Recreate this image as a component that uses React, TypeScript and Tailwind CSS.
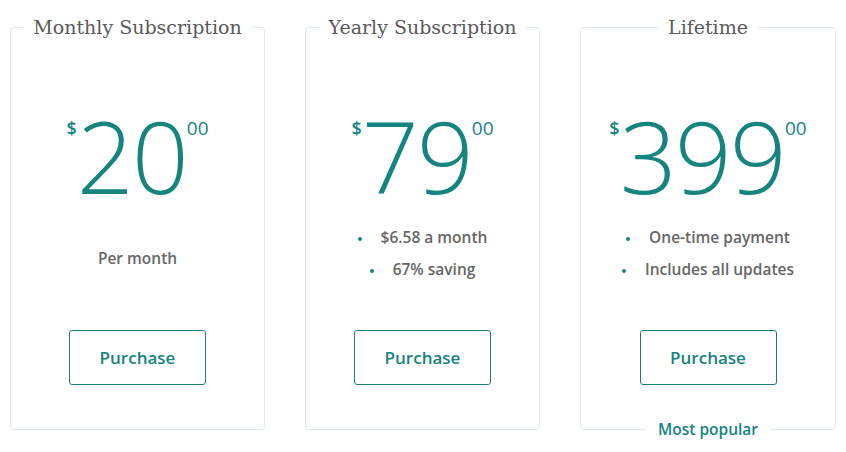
import React from 'react';

interface Plan {
  title: string;
  price: string;
  width: string;
  detailsPad: string;
  details: string[];
  bullets: boolean;
  badge?: string;
}

const PLANS: Plan[] = [
  { title: 'Monthly Subscription', price: '20', width: 'w-[255px]', detailsPad: 'pt-[37px]', details: ['Per month'], bullets: false },
  { title: 'Yearly Subscription', price: '79', width: 'w-[235px]', detailsPad: 'pt-[16px]', details: ['$6.58 a month', '67% saving'], bullets: true },
  { title: 'Lifetime', price: '399', width: 'w-[256px]', detailsPad: 'pt-[16px]', details: ['One-time payment', 'Includes all updates'], bullets: true, badge: 'Most popular' },
];

function PlanCard({ plan }: { plan: Plan }) {
  return (
    <fieldset className={`relative ${plan.width} shrink-0 rounded-[4px] border border-[#dce9ea]`}>
      <legend
        className="mx-auto px-[10px] text-[19px] leading-[28px] text-[#595959]"
        style={{ fontFamily: '"DejaVu Serif", "Liberation Serif", serif' }}
      >
        {plan.title}
      </legend>

      <div className="flex flex-col items-center pb-[44px]">
        {/* price */}
        <div className="mt-[64px] flex items-start text-[#15847f]">
          <span className="mt-[14px] text-[18px] leading-none font-semibold">$</span>
          <span className="text-[100px] leading-none font-light tracking-[-2px]">{plan.price}</span>
          <span className="mt-[14px] text-[19px] leading-none font-medium">00</span>
        </div>

        <div className={`h-[125px] ${plan.detailsPad}`}>
          <ul className={`text-[15.5px] leading-[32px] font-semibold text-[#666] text-center ${plan.bullets ? 'list-disc list-inside marker:text-[#15847f] marker:text-[12px]' : ''}`}>
            {plan.details.map((d) => (
              <li key={d} className="h-[32px]">
                {plan.bullets ? <span className="pl-[6px]">{d}</span> : d}
              </li>
            ))}
          </ul>
        </div>

        <button className="h-[55px] w-[137px] rounded-[3px] border border-[#1a7f7b] text-[17px] font-semibold text-[#15847f]">
          Purchase
        </button>
      </div>

      {plan.badge && (
        <span className="absolute bottom-0 left-1/2 -translate-x-1/2 translate-y-1/2 bg-white px-[12px] text-[15.5px] leading-[20px] font-semibold text-[#15847f] whitespace-nowrap">
          {plan.badge}
        </span>
      )}
    </fieldset>
  );
}

export default function App(): JSX.Element {
  return (
    <div
      className="w-[846px] h-[452px] bg-white pt-[13px] pl-[10px] flex items-start gap-[40px]"
      style={{ fontFamily: '"Open Sans", "Liberation Sans", sans-serif' }}
    >
      {PLANS.map((p) => (
        <PlanCard key={p.title} plan={p} />
      ))}
    </div>
  );
}
